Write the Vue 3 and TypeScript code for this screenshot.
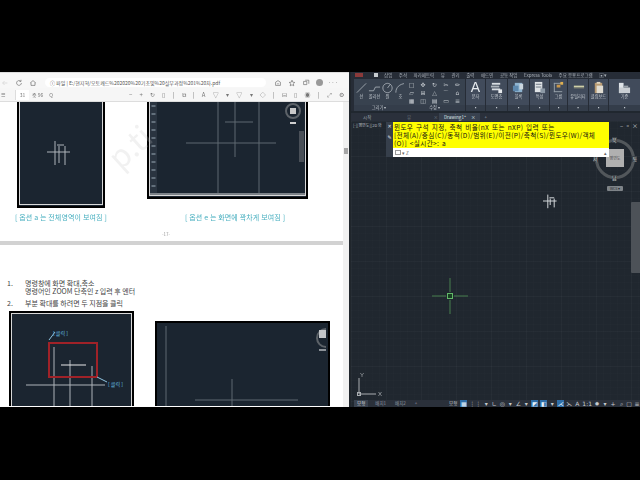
<template>
  <div class="screen">
    <div class="main">
      <!-- PDF viewer -->
      <section class="viewer">
        <div class="addr-row">
          <svg class="nav-ic" viewBox="0 0 10 10"><path d="M8 5H2M4.500 2.500 2 5l2.500 2.500" /></svg>
          <svg class="nav-ic dark" viewBox="0 0 10 10"><path d="M8 5a3 3 0 1 1-1-2.300M7.500 1v2h-2" /></svg>
          <svg class="nav-ic dark" viewBox="0 0 10 10"><path d="M1.500 5 5 2l3.500 3M2.500 4.500V8h5V4.500" /></svg>
          <div class="addr-box">ⓘ 파일 | E:/현지혁/오토캐드%202020%20기초및%20실무과정%201%20차.pdf</div>
          <svg class="nav-ic dark" viewBox="0 0 10 10"><path d="M2 8V4l3-2 3 2v4zM4 6h2" /></svg>
          <svg class="nav-ic dark" viewBox="0 0 10 10"><path d="M5 1.500 6 4l2.500.3L6.700 6l.5 2.500L5 7.200 2.800 8.500 3.300 6 1.500 4.300 4 4z" /></svg>
          <svg class="nav-ic dark" viewBox="0 0 10 10"><path d="M2 3h4v4H2zM4 1.500h4.500V6" /></svg>
          <span class="avatar"></span>
          <span class="dots">···</span>
        </div>
        <div class="pdf-tools">
          <span class="tb-menu">☰</span>
          <span class="tb-page">31</span>
          <span class="tb-text">중 96</span>
          <span class="tb-text q">Q</span>
          <span class="tb-right">
            <span v-for="(t, i) in pdfTools" :key="i">{{ t }}</span>
          </span>
        </div>
        <div class="doc">
          <div class="pages">
            <div class="page first">
              <div class="shots">
                <div class="shot-col one">
                  <svg class="cad" width="88" height="106" viewBox="0 0 88 106">
                    <rect x="1" y="-4" width="86" height="109" fill="#1b2530" stroke="#000" stroke-width="2" />
                    <rect x="2.500" y="-4" width="83" height="106.500" fill="none" stroke="#d8d8d8" />
                    <path class="ln" d="M30 50h23M38 39v24M42 44v17M48 44v19M40 43h7" />
                  </svg>
                  <p class="caption">[ 옵션 a 는 전체영역이 보여짐 ]</p>
                </div>
                <div class="shot-col two">
                  <svg class="cad" width="161" height="97" viewBox="0 0 161 97">
                    <rect x="1" y="-4" width="159" height="100" fill="#1b2530" stroke="#000" stroke-width="2" />
                    <rect x="2.500" y="-4" width="156" height="97.500" fill="none" stroke="#d8d8d8" />
                    <rect x="3" y="0" width="7" height="93" fill="#2a3440" />
                    <path d="M4.500 4h4M4.500 12h4M4.500 20h4M4.500 28h4M4.500 36h4M4.500 44h4M4.500 52h4M4.500 60h4M4.500 68h4M4.500 76h4M4.500 84h4" stroke="#76838f" stroke-width="1.500" />
                    <path class="ln dim" d="M71 0v93M88 0v55M112 0v91M39 41h90M78 20h28" />
                    <circle cx="146" cy="9" r="7" fill="none" stroke="#5c6268" stroke-width="2" />
                    <rect x="143" y="6" width="6" height="6" fill="#c8c8c8" />
                    <rect x="143" y="20" width="6" height="2" fill="#cfcfcf" />
                    <rect x="152" y="29" width="5" height="31" fill="#4a5058" />
                    <rect x="3" y="91" width="155" height="2" fill="#7c8288" />
                  </svg>
                  <p class="caption shift">[ 옵션 e 는 화면에 꽉차게 보여짐 ]</p>
                </div>
              </div>
              <p class="page-no">-17-</p>
              <span class="watermark">p.ti</span>
            </div>
            <div class="page second">
              <ol class="steps">
                <li>
                  <span class="num">1.</span>
                  <span class="step-lines"><span>명령창에 화면 확대,축소</span><span>명령어인 ZOOM 단축인 z 입력 후 엔터</span></span>
                </li>
                <li>
                  <span class="num">2.</span>
                  <span>부분 확대를 하려면 두 지점을 클릭</span>
                </li>
              </ol>
              <div class="shots lower">
                <svg class="cad" width="125" height="95" viewBox="0 0 125 95">
                  <rect x="1" y="1" width="123" height="100" fill="#1b2530" stroke="#000" stroke-width="2" />
                  <rect x="2.500" y="2.500" width="120" height="100" fill="none" stroke="#d8d8d8" />
                  <path class="ln" d="M45 36v59M61 49v46M83 55v40M17 74h79" />
                  <path d="M52 54h25" stroke="#e8e8e8" stroke-width="1" />
                  <rect x="40" y="32" width="48" height="34" fill="none" stroke="#a02228" stroke-width="2" />
                  <path d="M46 21l-6 8M88 66l10 5" stroke="#8fc4e0" stroke-width="1" />
                  <text x="44" y="24" class="callout">[ 클릭 ]</text>
                  <text x="99" y="75" class="callout">[ 클릭 ]</text>
                </svg>
                <svg class="cad wide" width="175" height="85" viewBox="0 0 175 85">
                  <rect x="1" y="1" width="173" height="90" fill="#1b2530" stroke="#000" stroke-width="2" />
                  <path class="ln dim" d="M11 5v80M77 58v27M40 79h103" />
                  <path d="M171 8a9 9 0 0 0 0 18" fill="none" stroke="#5c6268" stroke-width="2" />
                  <rect x="164" y="9" width="7" height="8" fill="#c2c5c8" />
                  <rect x="164" y="28" width="7" height="2" fill="#8c9298" />
                </svg>
              </div>
            </div>
          </div>
          <div class="scrollbar"><span class="thumb"></span></div>
        </div>
      </section>

      <!-- AutoCAD window -->
      <section class="cad-app">
        <div class="menu-tabs">
          <i class="app-red"></i>
          <i class="app-home"></i>
          <span v-for="t in menuTabs" :key="t">{{ t }}</span>
        </div>
        <div class="ribbon">
          <div class="panel draw">
            <div class="draw-tools">
              <div v-for="d in drawTools" :key="d.label" class="draw-tool">
                <svg viewBox="0 0 14 12"><path :d="d.path" /></svg>
                <small>{{ d.label }}</small>
              </div>
            </div>
            <small class="foot">그리기 ▾</small>
          </div>
          <div class="panel modify">
            <div class="mod-grid">
              <span v-for="(m, i) in modifyGlyphs" :key="i">{{ m }}</span>
            </div>
            <small class="foot">수정 ▾</small>
          </div>
          <div v-for="p in bigPanels" :key="p.label" class="panel big" :style="{ width: p.width + 'px' }">
            <span v-if="p.label === '문자'" class="big-a">A</span>
            <svg v-else class="big-ic" viewBox="0 0 14 14">
              <rect v-for="(r, i) in p.shapes" :key="i" :x="r[0]" :y="r[1]" :width="r[2]" :height="r[3]" :fill="r[4]" />
            </svg>
            <small>{{ p.label }}</small>
            <small class="foot">▪</small>
          </div>
        </div>
        <div class="file-tabs">
          <span class="file-tab">시작</span>
          <span class="file-tab mid">뷰<em>×</em></span>
          <span class="file-tab current">Drawing1*<em>×</em></span>
          <span class="file-tab">+</span>
        </div>
        <div class="viewport">
          <span class="vp-label">[-][평면도][2D 와</span>
          <span class="win-btns">– ▫ ×</span>

          <div class="viewcube">
            <span class="ring"></span>
            <span class="cube">평면도</span>
            <b class="n">북</b><b class="s">남</b><b class="w">서</b><b class="e">동</b>
            <span class="wcs">WCS ▾</span>
          </div>
          <span class="nav-bar"></span>

          <div class="side-tools">
            <span>✕</span>
            <span>✎</span>
          </div>
          <div class="prompt">
            <p class="prompt-text">
              <span>윈도우 구석 지정, 축척 비율(nX 또는 nXP) 입력 또는</span>
              <span>[전체(A)/중심(C)/동적(D)/범위(E)/이전(P)/축척(S)/윈도우(W)/객체</span>
              <span>(O)] &lt;실시간&gt;: a</span>
            </p>
            <div class="prompt-input"><span class="cmd-ic"></span>▾ Z<i>▴</i></div>
          </div>

          <svg class="small-shape" width="16" height="16" viewBox="0 0 20 18">
            <path d="M0 9h17M6 1v17M9 6v8M14 6v11M8 5h6" fill="none" stroke="#d8dde0" stroke-width="1.200" />
          </svg>
          <svg class="cursor" width="36" height="36" viewBox="0 0 36 36">
            <path d="M0 18h14M22 18h14M18 0v14M18 22v14" stroke="#477f4e" fill="none" />
            <rect x="15.500" y="15.500" width="5" height="5" fill="#173d22" stroke="#62b868" />
          </svg>
          <svg class="ucs" width="34" height="34" viewBox="0 0 34 34">
            <path d="M5 9v16h17" stroke="#a9adb1" fill="none" />
            <rect x="3.500" y="23.500" width="3" height="3" fill="none" stroke="#a9adb1" />
            <text x="6" y="8" class="axis">Y</text>
            <text x="24" y="27" class="axis">X</text>
          </svg>

          <div class="status">
            <div class="layouts">
              <span class="on">모형</span><span>배치1</span><span>배치2</span><span>+</span>
            </div>
            <div class="status-icons">
              <span class="st-text">모형</span>
              <span v-for="(s, i) in statusIcons" :key="i" class="st" :class="{ active: s.active }">{{ s.glyph }}</span>
            </div>
          </div>
        </div>
      </section>
    </div>
  </div>
</template>

<script setup lang="ts">
interface DrawTool {
  label: string;
  path: string;
}

type Shape = [number, number, number, number, string];

interface BigPanel {
  label: string;
  width: number;
  shapes: Shape[];
}

const pdfTools = ['−', '+', '↻', '▯', '|', '⧉', '|', 'A', '▽', '▾', '▽', '▾', '◇', '|', '⊟', '▯', '◉', '|', '⤢', '⚙'];

const menuTabs = ['삽입', '주석', '파라메트릭', '뷰', '관리', '출력', '애드인', '공동 작업', 'Express Tools', '주요 응용프로그램', '▣▾'];

const drawTools: DrawTool[] = [
  { label: '선', path: 'M2 11 12 1' },
  { label: '폴리선', path: 'M1 9h5l2-4h5' },
  { label: '원', path: 'M7 1a5 5 0 1 0 .01 0M7 6l3-4' },
  { label: '호', path: 'M2 11C2 5 6 2 12 1' },
];

const modifyGlyphs = ['□', '✥', '↻', '✂', '✏', '▱', '⊞', '△', '⌒', '⌂', '▦', '◫', '▤', '▭', '≡'];

const bigPanels: BigPanel[] = [
  { label: '문자', width: 19, shapes: [] },
  {
    label: '도면층',
    width: 21,
    shapes: [[2, 2, 9, 2, '#d7dde2'], [1, 5, 9, 2, '#aeb6bd'], [2, 8, 9, 2, '#d7dde2'], [9, 9, 4, 4, '#e6e9ec']],
  },
  {
    label: '블록',
    width: 21,
    shapes: [[3, 2, 8, 10, '#8fb4d0'], [1, 5, 6, 6, '#5d88ad'], [8, 3, 4, 6, '#cbd6de']],
  },
  {
    label: '특성',
    width: 19,
    shapes: [[2, 1, 8, 11, '#dfe3e6'], [3, 3, 6, 1, '#6a7480'], [3, 6, 6, 1, '#6a7480'], [8, 8, 5, 5, '#8c99a5']],
  },
  {
    label: '그룹',
    width: 17,
    shapes: [[2, 2, 1, 10, '#99a2ab'], [2, 2, 9, 1, '#99a2ab'], [2, 11, 9, 1, '#99a2ab'], [5, 4, 4, 3, '#c9974a'], [9, 1, 3, 3, '#e0b050']],
  },
  {
    label: '유틸리티',
    width: 20,
    shapes: [[2, 5, 11, 2, '#cfd0a8'], [2, 7, 11, 1, '#7d8070']],
  },
  {
    label: '클립보드',
    width: 19,
    shapes: [[3, 2, 8, 11, '#b89a72'], [5, 1, 4, 2, '#ddd2bd'], [5, 5, 7, 8, '#e0dcd2']],
  },
  {
    label: '기준',
    width: 31,
    shapes: [[1, 2, 5, 11, '#dfe4e8'], [1, 7, 12, 6, '#c9ced3'], [6, 5, 5, 2, '#9aa2aa']],
  },
];

const statusIcons = [
  { glyph: '▦', active: true },
  { glyph: '⋮⋮', active: false },
  { glyph: '▾', active: false },
  { glyph: '∟', active: false },
  { glyph: '◎', active: false },
  { glyph: '▾', active: false },
  { glyph: '∠', active: false },
  { glyph: '▾', active: false },
  { glyph: '◩', active: true },
  { glyph: '◧', active: true },
  { glyph: '▾', active: false },
  { glyph: '⋌', active: true },
  { glyph: '⋋', active: false },
  { glyph: 'Α', active: false },
  { glyph: '1:1', active: false },
  { glyph: '✹', active: false },
  { glyph: '▾', active: false },
  { glyph: '+', active: false },
  { glyph: '⌕', active: false },
  { glyph: '▢', active: false },
  { glyph: '≡', active: false },
];
</script>

<style scoped>
.screen {
  width: 640px;
  height: 480px;
  box-sizing: border-box;
  padding: 72px 0 73px;
  background: #000;
  font-family: "Noto Sans CJK KR", "Noto Sans", sans-serif;
  overflow: hidden;
}

.main {
  display: flex;
  height: 335px;
  filter: blur(0.45px);
}

.viewer {
  width: 351px;
  display: flex;
  flex-direction: column;
  background: #fff;
  border-right: 2px solid #20262c;
  box-sizing: border-box;
}

.addr-row {
  height: 16px;
  display: flex;
  align-items: center;
  padding: 4px 0 0 1px;
  box-sizing: border-box;
  background: #f7f7f7;
  border-top: 1px solid #ddd;
}

.nav-ic {
  width: 8px;
  height: 8px;
  flex: none;
  margin-right: 6px;
  fill: none;
  stroke: #d0d0d0;
  stroke-width: 0.800;
}

.nav-ic.dark {
  stroke: #666;
}

.addr-box {
  width: 221px;
  height: 9px;
  flex: none;
  margin: 0 8px 0 2px;
  padding-left: 5px;
  box-sizing: border-box;
  border-radius: 5px;
  background: #fff;
  font-size: 5px;
  line-height: 9px;
  color: #555;
  white-space: nowrap;
  overflow: hidden;
}

.avatar {
  width: 7px;
  height: 7px;
  border-radius: 50%;
  background: #999;
}

.dots {
  font-size: 6px;
  line-height: 8px;
  color: #555;
  margin-left: 5px;
}

.pdf-tools {
  height: 14px;
  display: flex;
  align-items: center;
  gap: 3px;
  padding: 0 5px 0 1px;
  background: #f6f6f6;
  border-bottom: 1px solid #ddd;
  box-sizing: border-box;
  font-size: 5px;
  color: #777;
}

.tb-menu {
  width: 11px;
}

.tb-page {
  width: 13px;
  height: 10px;
  line-height: 10px;
  text-align: center;
  background: #fff;
  border-left: 1px solid #ddd;
}

.q {
  margin-left: 3px;
}

.tb-right {
  margin-left: auto;
  width: 215px;
  display: flex;
  justify-content: space-between;
  font-size: 6px;
  line-height: 10px;
  color: #777;
}

.doc {
  flex: 1;
  display: flex;
  min-height: 0;
}

.pages {
  width: 343px;
  display: flex;
  flex-direction: column;
  gap: 4px;
  background: #d2d2d2;
  overflow: hidden;
}

.page {
  position: relative;
  background: #fff;
  flex: none;
}

.page.first {
  height: 139px;
  overflow: hidden;
}

.page.second {
  height: 163px;
  padding-top: 34px;
  box-sizing: border-box;
}

.shots {
  display: flex;
  align-items: flex-start;
  padding-left: 17px;
}

.shot-col {
  display: flex;
  flex-direction: column;
}

.shot-col.one {
  width: 130px;
}

.cad {
  display: block;
}

.caption {
  margin: 0;
  font-size: 7px;
  line-height: 10px;
  letter-spacing: 0.15px;
  color: #45aebf;
  white-space: nowrap;
}

.one .caption {
  margin: 4px 0 0 -2px;
}

.caption.shift {
  margin: 13px 0 0 38px;
}

.page-no {
  position: absolute;
  left: 162px;
  top: 129px;
  margin: 0;
  font-size: 4.500px;
  line-height: 6px;
  color: #999;
}

.watermark {
  position: absolute;
  left: 106px;
  top: 26px;
  font-size: 31px;
  line-height: 36px;
  color: rgba(190, 190, 190, 0.22);
  transform: rotate(-42deg);
}

.steps {
  margin: 0;
  padding: 0 0 0 7px;
  list-style: none;
  font-size: 7px;
  line-height: 8px;
  color: #444;
}

.steps li {
  display: flex;
  margin-bottom: 4px;
}

.step-lines {
  display: flex;
  flex-direction: column;
}

.num {
  width: 18px;
  flex: none;
}

.shots.lower {
  padding-left: 9px;
  gap: 21px;
  margin-top: 3px;
}

.cad.wide {
  margin-top: 10px;
}

.ln {
  fill: none;
  stroke: #aeb4b9;
  stroke-width: 1;
}

.ln.dim {
  stroke: #5f6870;
}

.callout {
  font-size: 5px;
  fill: #68c0e8;
  font-family: "Noto Sans CJK KR", sans-serif;
}

.scrollbar {
  flex: 1;
  background: #f1f1f1;
  position: relative;
}

.thumb {
  position: absolute;
  left: 1px;
  top: 46px;
  width: 4px;
  height: 6px;
  background: #a6a6a6;
}

.cad-app {
  flex: 1;
  min-width: 0;
  display: flex;
  flex-direction: column;
  background: #20272f;
}

.menu-tabs {
  height: 6px;
  display: flex;
  align-items: center;
  gap: 6.500px;
  padding-left: 4px;
  background: #262c36;
  font-size: 4.500px;
  color: #aab0b8;
  white-space: nowrap;
  overflow: hidden;
}

.menu-tabs i {
  flex: none;
  height: 4px;
}

.app-red {
  width: 8px;
  background: #8b3a3a;
}

.app-home {
  width: 4px;
  margin: 0 0 0 4px;
  background: #c8ccd0;
}

.ribbon {
  height: 32px;
  display: flex;
  gap: 1px;
  padding: 1px 0 0 3px;
  box-sizing: content-box;
  background: #262c36;
}

.panel {
  display: flex;
  flex-direction: column;
  align-items: center;
  box-sizing: border-box;
  background: #38424f;
  font-size: 4.500px;
  color: #c2c8ce;
  overflow: hidden;
}

.panel small {
  font-size: 4.200px;
  line-height: 5px;
  white-space: nowrap;
}

.panel .foot {
  margin-top: auto;
  width: 100%;
  height: 6px;
  text-align: center;
  background: #343d4a;
}

.panel.draw {
  width: 50px;
  margin-right: -1px;
}

.panel.modify {
  width: 61px;
}

.draw-tools {
  display: flex;
  justify-content: space-between;
  width: 100%;
  padding: 3px 0 0 1px;
  box-sizing: border-box;
}

.draw-tool {
  display: flex;
  flex-direction: column;
  align-items: center;
  width: 13px;
}

.draw-tool svg {
  width: 13px;
  height: 12px;
  fill: none;
  stroke: #b9c0c7;
  stroke-width: 0.800;
}

.mod-grid {
  display: grid;
  grid-template-columns: repeat(5, 11.500px);
  grid-auto-rows: 8px;
  padding-top: 2px;
  font-family: "DejaVu Sans", sans-serif;
  font-size: 6px;
  line-height: 8px;
  text-align: center;
  color: #c8cdd2;
}

.panel.big {
  background: #414b5b;
  padding-top: 2px;
}

.big-ic {
  width: 13px;
  height: 13px;
  flex: none;
}

.big-a {
  font-size: 14px;
  line-height: 13px;
  color: #e6eaee;
  font-family: "Liberation Sans", sans-serif;
}

.file-tabs {
  height: 8px;
  margin-top: 2px;
  display: flex;
  background: #2a303b;
  font-size: 4.500px;
  line-height: 8px;
  color: #9aa1aa;
}

.file-tabs em {
  font-style: normal;
  margin-left: 5px;
}

.file-tab {
  padding: 0 10px 0 4px;
  white-space: nowrap;
}

.file-tab:first-child {
  width: 52px;
  padding: 0 0 0 12px;
  box-sizing: border-box;
}

.file-tab.mid {
  width: 36px;
  display: flex;
  justify-content: space-between;
  box-sizing: border-box;
  padding: 0 1px 0 4px;
  color: #6a727c;
}

.file-tab.current {
  background: #38414f;
  color: #dde1e5;
  padding: 0 5px 0 5px;
}

.viewport {
  position: relative;
  flex: 1;
  min-height: 0;
  background-color: #20272f;
  background-image:
    repeating-linear-gradient(to right, rgba(255, 255, 255, 0.02) 0 1px, transparent 1px 35px),
    repeating-linear-gradient(to bottom, rgba(255, 255, 255, 0.02) 0 1px, transparent 1px 35px),
    repeating-linear-gradient(to right, rgba(255, 255, 255, 0.008) 0 1px, transparent 1px 7px),
    repeating-linear-gradient(to bottom, rgba(255, 255, 255, 0.008) 0 1px, transparent 1px 7px);
}

.vp-label {
  position: absolute;
  left: 2px;
  top: 1px;
  font-size: 4px;
  line-height: 7px;
  color: #b5bac0;
  white-space: nowrap;
}

.win-btns {
  position: absolute;
  right: 2px;
  top: 1px;
  font-size: 6px;
  line-height: 7px;
  color: #c5c9cd;
}

.side-tools {
  position: absolute;
  left: 35px;
  top: 1px;
  width: 7px;
  height: 34px;
  display: flex;
  flex-direction: column;
  align-items: center;
  gap: 5px;
  padding-top: 1px;
  background: #363f4b;
  font-family: "DejaVu Sans", sans-serif;
  font-size: 5px;
  line-height: 6px;
  color: #e0e3e6;
}

.prompt {
  position: absolute;
  left: 42px;
  top: 1px;
  width: 216px;
}

.prompt-text {
  display: flex;
  flex-direction: column;
  margin: 0;
  height: 26px;
  padding: 1px 0 0 1px;
  box-sizing: border-box;
  background: #ffff00;
  font-family: "Noto Sans CJK KR", "DejaVu Sans Mono", monospace;
  font-size: 6.600px;
  line-height: 8px;
  letter-spacing: 0.35px;
  word-spacing: 1px;
  color: #111;
  white-space: nowrap;
  overflow: hidden;
}

.prompt-input {
  position: relative;
  height: 9px;
  display: flex;
  align-items: center;
  gap: 1px;
  padding-left: 2px;
  background: #fff;
  font-size: 4.500px;
  color: #666;
}

.prompt-input i {
  position: absolute;
  right: 2px;
  font-style: normal;
}

.cmd-ic {
  width: 6px;
  height: 5px;
  border: 1px solid #999;
  box-sizing: border-box;
}

.viewcube {
  position: absolute;
  left: 244px;
  top: 18px;
  width: 40px;
  height: 40px;
}

.ring {
  position: absolute;
  inset: 0;
  border: 3px solid #52575b;
  border-radius: 50%;
  box-sizing: border-box;
}

.cube {
  position: absolute;
  left: 11px;
  top: 10px;
  width: 18px;
  height: 18px;
  background: #b0b0b0;
  font-size: 4px;
  line-height: 18px;
  text-align: center;
  color: #555;
}

.viewcube b {
  position: absolute;
  font-size: 5px;
  font-weight: 400;
  line-height: 6px;
  color: #d3d5d7;
  background: #3b4147;
}

.viewcube .n { left: 17px; top: -2px; }
.viewcube .s { left: 17px; bottom: -2px; }
.viewcube .w { left: -2px; top: 17px; }
.viewcube .e { right: -2px; top: 17px; }

.wcs {
  position: absolute;
  left: 12px;
  top: 47px;
  width: 16px;
  height: 5px;
  border-radius: 1px;
  background: #7f8489;
  font-size: 3.500px;
  line-height: 5px;
  text-align: center;
  color: #26292d;
}

.nav-bar {
  position: absolute;
  right: 0;
  top: 81px;
  width: 9px;
  height: 71px;
  background: #4d5258;
  border-radius: 1px 0 0 1px;
}

.small-shape {
  position: absolute;
  left: 192px;
  top: 72px;
}

.cursor {
  position: absolute;
  left: 81px;
  top: 157px;
}

.ucs {
  position: absolute;
  left: 3px;
  top: 248px;
}

.axis {
  font-size: 6px;
  fill: #a9adb1;
  font-family: "Liberation Sans", sans-serif;
}

.status {
  position: absolute;
  left: 3px;
  right: 0;
  bottom: 0;
  height: 7px;
  display: flex;
  justify-content: space-between;
  background: #2a303a;
  font-size: 4.500px;
  line-height: 7px;
  color: #8f96a0;
}

.layouts {
  display: flex;
  gap: 5px;
}

.layouts span {
  padding: 0 2px;
}

.layouts .on {
  background: #3a4350;
  color: #d6d9dd;
  padding: 0 3px;
}

.status-icons {
  display: flex;
  gap: 2px;
  align-items: center;
  font-family: "DejaVu Sans", sans-serif;
  color: #c7cbcf;
}

.st-text {
  font-family: "Noto Sans CJK KR", sans-serif;
  margin-right: 1px;
}

.st {
  min-width: 6px;
  text-align: center;
  font-size: 6px;
  white-space: nowrap;
}

.st.active {
  background: #2f6ea8;
  color: #e8f1f8;
  min-width: 7px;
}
</style>

<style>
html,
body {
  margin: 0;
  background: #000;
}
</style>
